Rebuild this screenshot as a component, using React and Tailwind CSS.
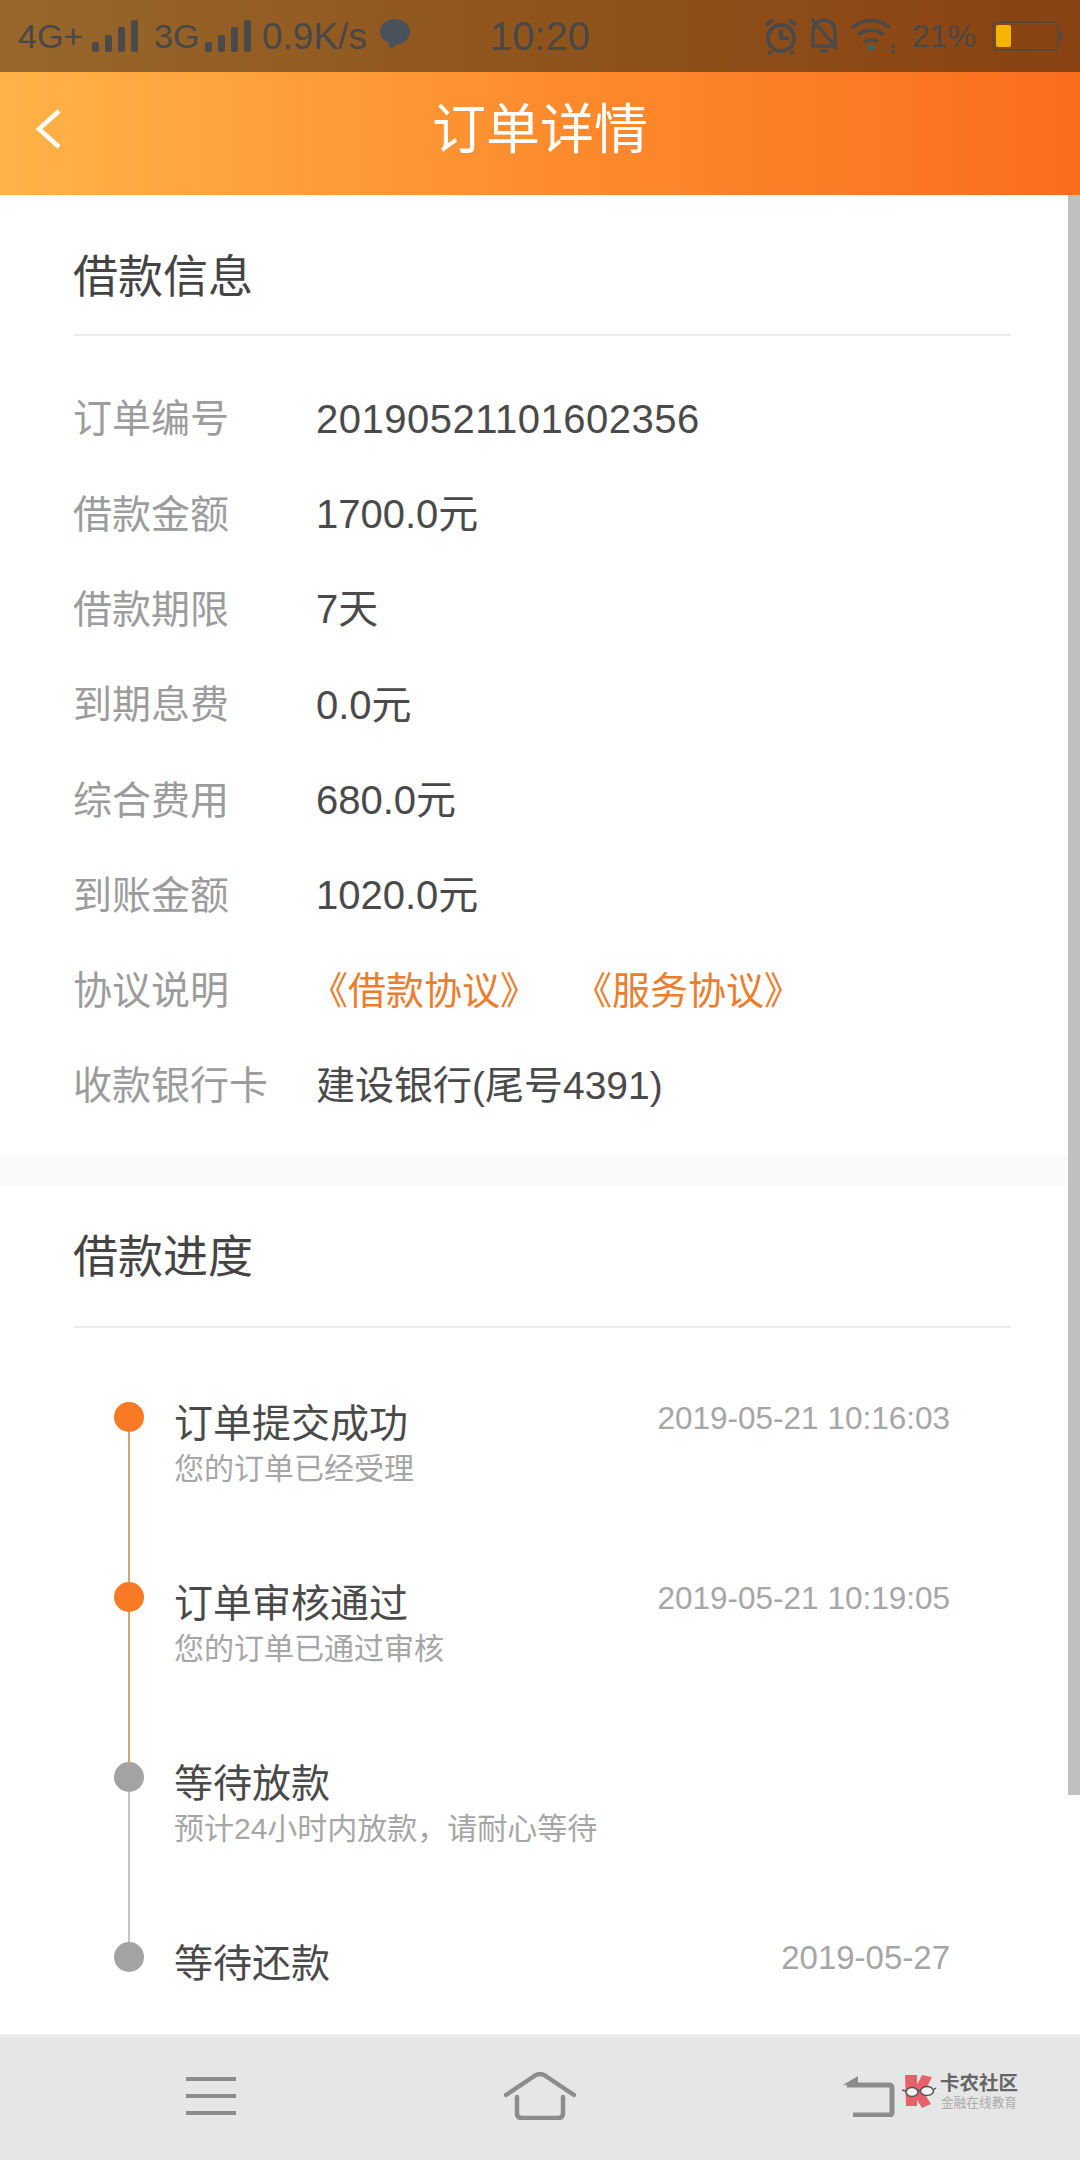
import React from "react";

const FONT = { fontFamily: '"Liberation Sans", "Noto Sans CJK SC", sans-serif' };

const loanRows = [
  ["借款金额", "1700.0元"],
  ["借款期限", "7天"],
  ["到期息费", "0.0元"],
  ["综合费用", "680.0元"],
  ["到账金额", "1020.0元"],
];

const steps = [
  { title: "订单提交成功", sub: "您的订单已经受理", time: "2019-05-21 10:16:03", done: true },
  { title: "订单审核通过", sub: "您的订单已通过审核", time: "2019-05-21 10:19:05", done: true },
  { title: "等待放款", sub: "预计24小时内放款，请耐心等待", time: "", done: false },
  { title: "等待还款", sub: "", time: "2019-05-27", done: false, last: true },
];

function Signal() {
  return (
    <svg width="46" height="34" viewBox="0 0 46 34" fill="#4a4a4a">
      <rect x="0" y="23" width="7" height="10" rx="2" />
      <rect x="13" y="16" width="7" height="17" rx="2" />
      <rect x="26" y="8" width="7" height="25" rx="2" />
      <rect x="39" y="1" width="7" height="32" rx="2" />
    </svg>
  );
}

function StatusBar() {
  return (
    <div className="flex h-[72px] shrink-0 items-center bg-gradient-to-r from-[#97672c] via-[#8f541c] to-[#8a4212] pl-[18px] pr-[17px] text-[#484848]">
      <span className="w-[65px] text-[34px] leading-none">4G+</span>
      <div className="ml-[9px]"><Signal /></div>
      <span className="ml-[16px] w-[45px] text-[34px] leading-none">3G</span>
      <div className="ml-[6px]"><Signal /></div>
      <span className="ml-[11px] w-[105px] text-[37px] leading-none">0.9K/s</span>
      <svg className="ml-[12px] -mt-[4px]" width="32" height="32" viewBox="0 0 32 32" fill="#47525c">
        <path d="M16 1C7.700 1 1 6.600 1 13.500c0 5 3.200 8.700 7.500 10.500.8.300 1.200 1.200 1.300 2.200.2 1.500 1 4.300 2.200 4.300 2 0 4.500-3.300 6.500-4.200C25.500 25.300 31 20.500 31 13.500 31 6.600 24.300 1 16 1Z" />
      </svg>
      <span className="ml-[79px] text-[40px] leading-none">10:20</span>
      <div className="flex-1" />
      <svg width="36" height="38" viewBox="0 0 36 38" fill="none" stroke="#4a4a4a" strokeWidth="4">
        <circle cx="18" cy="21" r="13" />
        <path d="M18 12v9h8M3 8l7-5M33 8l-7-5M8 34l-2 3M28 34l2 3" />
      </svg>
      <svg className="ml-[10px]" width="30" height="38" viewBox="0 0 30 38" fill="none" stroke="#4a4a4a" strokeWidth="3.500">
        <path d="M4 29V14a11 11 0 0 1 22 0v15H2M3 2l25 30M11 34h8" />
      </svg>
      <svg className="ml-[12px]" width="46" height="36" viewBox="0 0 46 36" fill="none" stroke="#4a4a4a" strokeWidth="3.500">
        <path d="M1 10c11-10 27-10 38 0M7 17c7.500-6.500 18.500-6.500 26 0M13 24c4-3 10-3 14 0" />
        <path d="M16 29c2-1.500 6-1.500 8 0l-4 4Z" fill="#2c6b78" stroke="#2c6b78" strokeWidth="1" />
        <path d="M42 26v4M42 32v4" strokeWidth="3" />
      </svg>
      <span className="ml-[15px] w-[64px] text-[32px] leading-none">21%</span>
      <div className="ml-[16px] flex h-[30px] w-[67px] items-center rounded-[6px] border-[2px] border-[#5b4a38] p-[2px]">
        <div className="h-full w-[15px] rounded-[2px] bg-[#f5b400]" />
      </div>
      <div className="h-[10px] w-[4px] rounded-r-sm bg-[#5b4a38]" />
    </div>
  );
}

function Header() {
  return (
    <div className="relative flex h-[123px] shrink-0 items-center justify-center bg-gradient-to-r from-[#ffb347] via-[#fd8c2e] to-[#fa6c1e] pb-[8px]">
      <svg className="absolute left-[34px] top-[36px]" width="30" height="42" viewBox="0 0 30 42" fill="none" stroke="#fff" strokeWidth="4.500">
        <path d="M25 3 5 21l20 18" />
      </svg>
      <h1 className="text-[54px] font-normal leading-none text-white">订单详情</h1>
    </div>
  );
}

function SectionTitle({ children, className }) {
  return (
    <div className={`ml-[73px] mr-[69px] border-b-2 border-[#ececec] text-[45px] leading-[60px] text-[#444] ${className}`}>
      {children}
    </div>
  );
}

function Row({ label, children }) {
  return (
    <div className="flex h-[95.300px] items-center">
      <span className="mt-[2px] w-[243px] text-[39px] text-[#9c9c9c]">{label}</span>
      <span className="text-[40px] text-[#4a4a4a]">{children}</span>
    </div>
  );
}

function Step({ step }) {
  const dot = step.done ? "bg-[#f97a24]" : "bg-[#a3a3a3]";
  const line = step.done ? "bg-[#d3a76f]" : "bg-[#c4c4c4]";
  return (
    <div className="flex h-[180px]">
      <div className="flex w-[30px] flex-col items-center">
        <div className={`h-[30px] w-[30px] shrink-0 rounded-full ${dot}`} />
        {!step.last && <div className={`w-[2px] flex-1 ${line}`} />}
      </div>
      <div className="ml-[30px] w-[776px]">
        <div className="flex justify-between">
          <div className="-mt-[3px]">
            <div className="text-[39px] leading-[50px] text-[#4a4a4a]">{step.title}</div>
            <div className="text-[30px] leading-[40px] text-[#a6a6a6]">{step.sub}</div>
          </div>
          <div className={`-mt-[4px] leading-[40px] text-[#a6a6a6] ${step.last ? "text-[33px]" : "text-[31.500px]"}`}>{step.time}</div>
        </div>
      </div>
    </div>
  );
}

function NavBar() {
  return (
    <div className="relative grid h-[126px] shrink-0 grid-cols-3 items-center border-t-[3px] border-[#eeeeee] bg-[#e6e6e6] px-[46px] pb-[5px]">
      <div className="flex justify-center">
        <svg width="50" height="40" viewBox="0 0 50 40" fill="#8c8c8c">
          <rect y="1" width="50" height="4" />
          <rect y="18" width="50" height="4" />
          <rect y="35" width="50" height="4" />
        </svg>
      </div>
      <div className="flex justify-center">
        <svg width="72" height="48" viewBox="0 0 72 48" fill="none" stroke="#8c8c8c" strokeWidth="4.500" strokeLinecap="round">
          <path d="M2 23 32 3q4-2 8 0l30 20" />
          <path d="M13 25v16q0 5 5 5h36q5 0 5-5V25" />
        </svg>
      </div>
      <div className="flex justify-center">
        <svg width="52" height="42" viewBox="0 0 52 42" fill="none" stroke="#8c8c8c" strokeWidth="5">
          <path d="M4 10h42q3 0 3 3v24q0 3-3 3H10" />
          <path d="M0 10 15 1v10Z" fill="#8c8c8c" stroke="none" />
        </svg>
      </div>
      {/* watermark sits over the nav bar */}
      <div className="absolute left-[900px] top-[36px] flex items-start">
        <svg width="40" height="38" viewBox="0 0 40 38">
          <path d="M5 2h12v10l5-10 10 2-8 16 7 11-9 4-5-8v6H6Z" fill="#e8616a" />
          <ellipse cx="12" cy="19" rx="6" ry="4.500" fill="#f2f2f2" stroke="#555" strokeWidth="1.500" />
          <ellipse cx="27" cy="18" rx="6.500" ry="4.500" fill="#f2f2f2" stroke="#555" strokeWidth="1.500" />
          <path d="M18 18h3M6 18l-4-1M33 17l3-2" stroke="#555" strokeWidth="1.500" />
        </svg>
        <div className="-mt-[1px] text-center">
          <div className="text-[19.500px] font-bold leading-[22px] text-[#666]">卡农社区</div>
          <div className="mt-[2px] text-[12.700px] leading-[14px] text-[#aaa]">金融在线教育</div>
        </div>
      </div>
    </div>
  );
}

export default function App() {
  return (
    <div className="flex h-[2160px] w-[1080px] flex-col overflow-hidden bg-white" style={FONT}>
      <StatusBar />
      <Header />
      <div className="relative min-h-0 flex-1 overflow-hidden">
        <SectionTitle className="pb-[26px] pt-[53px]">借款信息</SectionTitle>
        <div className="px-[73px] pb-[22px] pt-[35px]">
          <Row label="订单编号">
            <span className="tracking-[0.5px]">20190521101602356</span>
          </Row>
          {loanRows.map(([label, value]) => (
            <Row key={label} label={label}>{value}</Row>
          ))}
          <Row label="协议说明">
            <span className="-ml-[6px] text-[38px] text-[#ec7d2e]">《借款协议》</span>
            <span className="ml-[55px] text-[38px] text-[#ec7d2e]">《服务协议》</span>
          </Row>
          <Row label="收款银行卡">
            <span className="text-[39px]">建设银行(尾号4391)</span>
          </Row>
        </div>
        <div className="h-[30px] bg-[#fafafa]" />
        <SectionTitle className="pb-[38px] pt-[43px]">借款进度</SectionTitle>
        <div className="pl-[114px] pt-[74px]">
          {steps.map((step) => (
            <Step key={step.title} step={step} />
          ))}
        </div>
        {/* scrollbar overlay */}
        <div className="absolute right-0 top-0 h-[1600px] w-[12px] bg-[#c0c0c0]" />
      </div>
      <NavBar />
    </div>
  );
}
